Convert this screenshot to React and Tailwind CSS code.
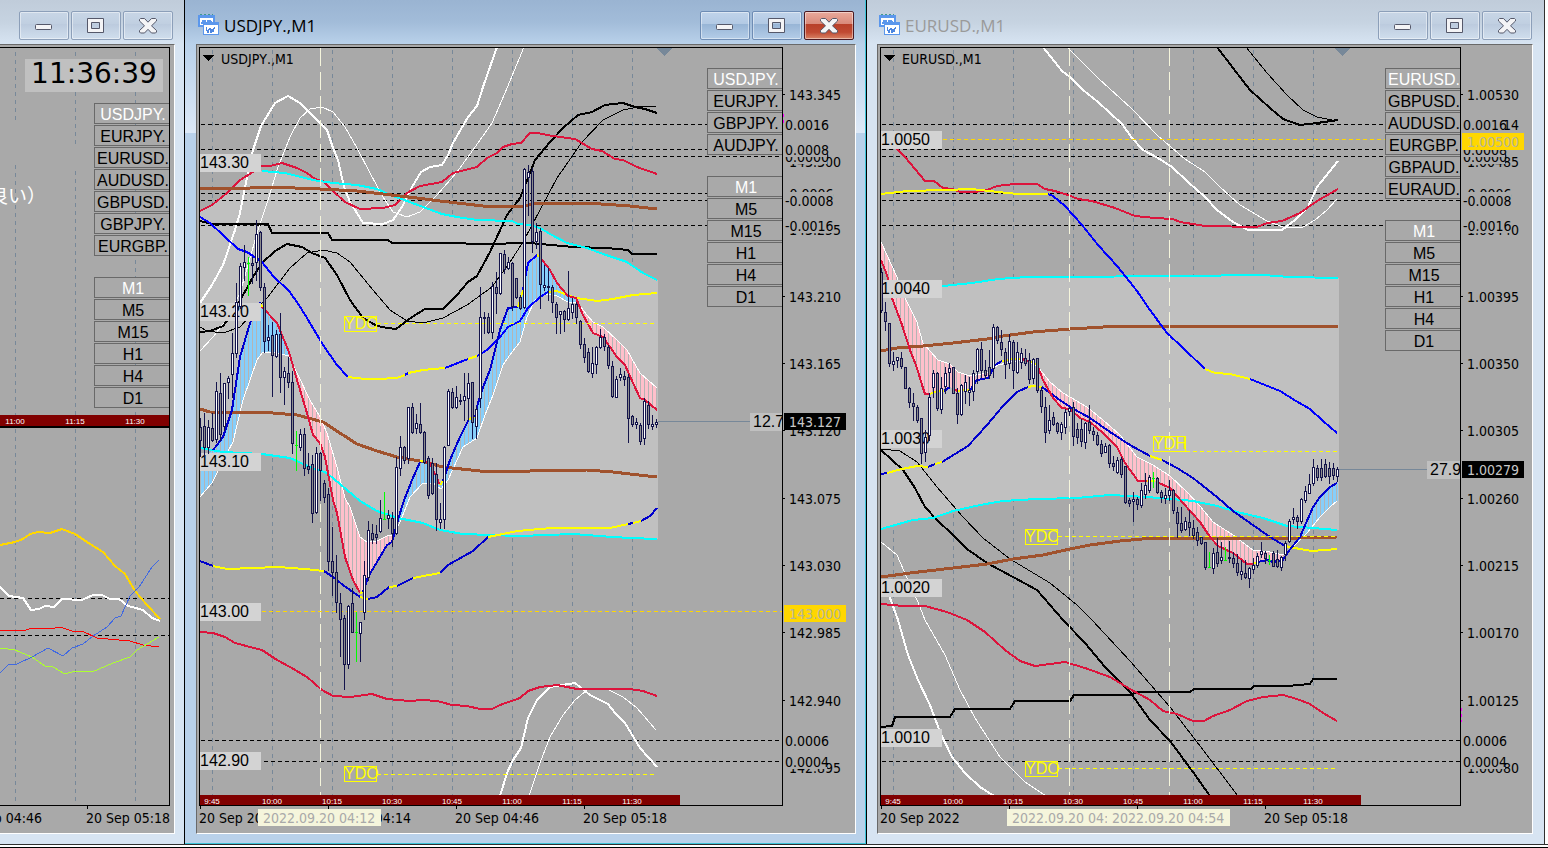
import React from "react";

const C = {
  red: "#dc143c",
  brown: "#a0522d",
  cyan: "#00ffff",
  blue: "#0000ff",
  navy: "#0000cd",
  yellow: "#ffff00",
  white: "#ffffff",
  black: "#000000",
  slate: "#778899",
  gold: "#ffd700",
};

const GRAY = "#a9a9a9";
const SILVER = "#c0c0c0";
const CONDENSED = '"DejaVu Sans Condensed", "DejaVu Sans", sans-serif';
const ARIAL = '"Liberation Sans", Arial, sans-serif';

/* Each chart is described in one shared coordinate space; `left` is where its plot starts. */
const USDJPY = {
  symbol: "USDJPY.",
  left: 200,
  axisLeft: 783,
  end: 658,
  marker: 664,
  grid: [212, 272, 332, 392, 452, 512, 572, 632],
  hours: ["9:45", "10:00", "10:15", "10:30", "10:45", "11:00", "11:15", "11:30"],
  levels: [124, 149, 156, 193, 200, 225, 740, 761],
  barEnd: 680,
  cursors: [320],
  cloud:
    "200,211 212,205 227,193 240,180 253,172 262,171 285,173 313,180 333,183 357,185 377,189 393,196 407,201 423,207 442,214 457,217 477,220 512,221 518,224 530,225 540,228 550,234 567,243 587,248 603,254 627,262 643,273 658,280 658,539 630,538 613,537 573,534 520,536 490,535 463,534 440,530 423,523 398,518 377,511 360,501 340,484 327,473 310,467 290,458 262,454 223,452 200,448",
  ribbons: [
    ["url(#sky)", "200,462 215,448 223,437 232,410 240,357 250,323 260,302 262,307 277,323 289,352 289,356 273,352 262,353 257,360 243,400 233,442 227,453 212,483 200,497"],
    ["url(#pink)", "289,352 297,373 310,400 320,417 327,433 337,467 345,498 350,507 360,537 367,542 377,541 387,536 393,535 392,542 387,545 377,562 368,577 363,592 360,593 353,580 345,557 337,513 333,500 325,457 320,443 313,435 307,413 297,380"],
    ["url(#sky)", "398,520 403,503 412,480 420,462 430,463 440,485 450,460 460,437 469,419 475,417 478,403 483,387 490,370 500,330 508,308 518,307 523,290 528,263 537,255 540,257 550,270 557,283 568,296 577,298 577,302 568,302 557,296 545,294 535,300 527,317 520,342 512,352 503,365 493,395 485,415 477,438 468,443 463,447 448,480 441,489 433,483 423,483 410,497 400,522"],
    ["url(#pink)", "577,300 587,315 593,322 603,327 617,340 627,350 640,373 657,388 657,410 645,400 640,398 633,383 625,365 617,357 603,337 593,333 583,315"],
  ],
  under: [
    [C.white, 1, "200,497 212,483 227,453 233,442 243,400 257,360 262,353 273,352 289,356 297,373 310,400 320,417 327,433 337,467 345,498 350,507 360,537 367,542 377,541 387,536 393,535 400,522 410,497 423,483 433,483 441,489 448,480 463,447 477,438 485,415 493,395 503,365 512,352 520,342 527,317 535,300 545,294 557,296 568,302 577,302 587,315 593,322 603,327 617,340 627,350 640,373 657,388"],
    [C.white, 2, "200,303 212,285 223,265 235,230 240,213 245,187 253,150 261,126 275,103 288,96 300,103 308,111 320,123 327,130 333,148 338,160 344,187 350,202 357,213 363,223 383,224 393,220 402,207 412,187 421,172 430,167 442,165 448,155 453,143 468,117 477,106 483,87 497,47"],
    [C.white, 1, "200,351 213,337 228,318 240,293 250,258 258,230 268,200 278,167 290,137 300,118 310,109 322,107 333,112 345,127 357,148 370,173 383,197 393,212 407,217 420,212 437,195 457,172 473,150 492,123 505,93 524,47"],
    [C.black, 2, "200,332 210,331 223,326 233,313 242,297 253,277 262,263 275,251 287,244 302,247 312,253 325,258 337,275 350,300 363,318 377,326 388,328 396,329 412,317 425,309 443,309 457,295 468,282 477,276 490,252 507,215 520,198 528,178 535,160 550,142 563,128 578,115 592,112 605,105 623,103 635,107 645,109 657,113"],
    [C.black, 1, "200,327 207,331 223,333 240,327 257,308 267,298 290,268 307,253 323,250 337,253 350,262 373,290 390,310 407,321 423,323 443,318 467,305 492,287 510,262 523,242 540,210 557,178 582,142 603,120 623,110 643,106 656,107"],
    [C.black, 2, "200,221 212,224 268,224 272,233 328,233 332,240 388,240 392,243 448,243 483,244 530,243 573,247 607,248 628,250 632,254 657,254"],
    [C.white, 2, "500,796 507,773 513,760 521,748 528,718 537,700 550,687 575,683 590,695 608,704 615,713 625,723 640,748 657,767"],
    [C.white, 1, "529,796 540,763 550,737 563,715 575,700 587,690 607,689 623,697 637,708 656,730"],
    [C.red, 2, "200,211 212,205 227,193 240,180 253,172 261,166 270,166 282,163 297,168 307,173 315,179 323,181 333,191 345,202 360,209 383,208 395,205 407,193 420,186 442,182 453,173 477,167 487,158 497,153 503,147 512,144 521,143 530,133 537,133 553,136 575,139 592,149 602,151 615,159 623,160 637,167 657,174"],
    [C.red, 2, "200,632 213,633 225,637 235,643 250,647 262,650 277,660 290,667 307,677 322,690 333,696 350,697 372,694 387,699 410,701 423,700 437,701 452,705 467,706 480,709 492,709 500,705 520,698 528,691 540,687 557,685 577,689 630,689 643,691 657,696"],
    [C.cyan, 2, "262,171 285,173 313,180 333,183 357,185 377,189 393,196 407,201 423,207 442,214 457,217 477,220 512,221 518,224 530,225 540,228 550,234 567,243 587,248 603,254 627,262 643,273 657,280"],
    [C.cyan, 2, "200,448 223,452 262,454 290,458 310,467 327,473 340,484 360,501 377,511 398,518 423,523 440,530 463,534 490,535 520,536 573,534 613,537 630,538 657,539"],
    [C.brown, 3, "200,188 250,188 270,187 320,189 357,191 383,194 417,198 440,201 483,206 523,206 540,203 587,203 630,206 657,209"],
    [C.brown, 3, "200,409 210,412 273,413 297,415 323,422 343,435 357,444 377,451 397,457 420,461 443,467 480,471 530,471 587,470 613,472 630,474 657,477"],
    [C.blue, 2, "200,217 210,223 238,249 247,252 262,262 273,276 289,291 297,302 307,318 323,345 337,365 348,377"],
    [C.yellow, 2, "348,377 365,379 377,379 397,378 405,375"],
    [C.blue, 2, "405,375 408,373"],
    [C.yellow, 2, "408,373 423,370 445,368"],
    [C.blue, 2, "445,368 468,359"],
    [C.yellow, 2, "468,359 477,356"],
    [C.blue, 2, "477,356 487,350 500,337 508,327 520,321 528,308 540,297 548,292"],
    [C.yellow, 2, "548,292 557,291 570,296 577,298 597,301 613,299 633,295 657,293"],
    [C.navy, 2, "200,561 213,566"],
    [C.yellow, 2, "213,566 227,569 253,568 278,567 305,569 324,571"],
    [C.navy, 2, "324,571 333,577 343,585 360,597"],
    [C.yellow, 2, "360,597 368,599"],
    [C.navy, 2, "368,599 377,597 389,587"],
    [C.yellow, 2, "389,587 397,586"],
    [C.navy, 2, "397,586 413,578"],
    [C.yellow, 2, "413,578 440,573"],
    [C.navy, 2, "440,573 448,565 473,551 488,537"],
    [C.yellow, 2, "488,537 503,534 517,531 552,528 610,528 628,524"],
    [C.navy, 2, "628,524 633,523"],
    [C.yellow, 2, "633,523 641,521"],
    [C.navy, 2, "641,521 650,516 657,508"],
    [C.navy, 2, "213,450 217,445 223,437 232,410 240,357 250,323 260,302"],
    [C.yellow, 2, "260,303 263,308"],
    [C.red, 2, "262,307 277,323 289,352 297,380 307,413 313,435 320,443 325,457 333,500 337,513 345,557 353,580 360,593"],
    [C.yellow, 2, "360,593 363,592"],
    [C.navy, 2, "363,592 368,577 377,562 387,545 392,542 398,520 403,503 412,480 420,462"],
    [C.yellow, 2, "420,461 424,461"],
    [C.red, 2, "424,461 430,463 440,485"],
    [C.yellow, 2, "440,485 443,481"],
    [C.navy, 2, "443,481 450,460 460,437 469,419"],
    [C.yellow, 2, "469,419 475,417"],
    [C.navy, 2, "475,417 478,403 483,387 490,370 500,330 508,308 518,307"],
    [C.yellow, 2, "518,307 523,290"],
    [C.blue, 2, "523,290 528,263 537,255"],
    [C.yellow, 2, "537,255 540,257"],
    [C.red, 2, "540,257 550,270 557,283 568,296 576,298 583,315 593,333 603,337 617,357 625,365 633,383 640,398 645,400 657,410"],
  ],
  tags: [
    ["143.30", 154],
    ["143.20", 303],
    ["143.10", 453],
    ["143.00", 603],
    ["142.90", 752],
  ],
  dashes: [
    [C.gold, 611, 262, 782],
    [C.yellow, 323, 377, 657],
    [C.yellow, 774, 377, 657],
  ],
  notes: [
    ["YDC", 344, 316],
    ["YDO", 344, 766],
  ],
  bid: { y: 421, text: "12.7", x: 750 },
  candles:
    "418,427,440,456,d 413,426,447,457,d 420,427,447,453,u 413,428,440,441,d 382,391,439,442,u 373,393,434,440,d 383,383,426,430,u 376,378,382,398,u 333,353,374,397,u 283,302,353,357,u 263,266,306,308,u 245,262,267,280,u 257,263,263,296,g 257,263,265,283,d 220,234,262,280,u 231,232,287,290,d 283,287,341,352,d 325,337,340,350,u 322,335,355,396,d 330,334,356,357,u 313,334,377,392,d 367,371,377,404,u 357,373,382,387,d 371,382,443,453,d 431,445,445,471,g 429,434,447,450,u 428,434,468,475,d 453,466,469,473,d 455,464,513,522,d 447,453,512,513,u 452,453,470,500,d 480,483,497,502,d 488,494,561,570,d 527,561,572,595,d 555,572,602,612,d 593,603,619,656,d 615,618,664,689,d 605,606,664,668,u 588,603,632,632,d 612,632,632,662,g 622,622,633,661,u 561,575,612,619,u 521,530,577,580,u 524,533,539,543,d 525,534,537,543,d 500,518,531,532,u 492,519,519,520,g 510,515,518,528,u 512,518,533,546,d 457,467,533,534,u 436,447,468,475,u 446,447,460,463,d 407,407,458,463,u 403,407,432,433,d 414,423,428,433,u 403,424,432,433,d 431,432,462,463,d 456,458,495,498,d 458,463,493,494,d 463,474,519,530,d 503,519,522,528,u 446,447,519,528,u 389,391,445,445,u 388,392,407,408,d 386,397,407,408,u 394,400,401,404,d 373,396,400,420,u 373,383,398,420,u 382,382,422,438,d 406,409,426,438,u 287,317,398,407,u 312,317,318,333,u 313,317,332,333,d 282,286,332,338,u 272,287,293,313,d 253,253,293,294,u 250,254,269,273,d 257,262,268,269,u 262,263,306,310,d 278,278,297,298,d 295,297,308,309,d 168,169,307,308,u 165,172,177,215,u 168,171,241,252,d 223,232,241,248,u 228,231,284,308,d 265,285,287,290,u 268,286,287,300,u 285,287,302,312,d 302,304,317,333,d 311,311,314,333,u 310,311,319,331,d 271,308,319,320,u 298,304,312,318,u 302,304,317,323,d 320,321,344,348,d 338,344,357,362,d 348,352,371,372,d 347,363,373,377,u 346,347,364,373,u 329,337,347,348,u 334,337,346,350,d 345,347,365,368,d 361,366,396,397,d 376,379,397,397,u 368,374,377,380,u 371,376,379,385,d 374,377,418,442,d 415,416,424,426,d 418,422,424,428,u 423,425,441,444,d 398,401,438,444,u 401,405,424,428,d 415,424,426,429,u 419,422,424,427,u",
  axis: [
    ["143.345", 94], ["143.300", 161], ["143.255", 229], ["143.210", 296], ["143.165", 363], ["143.120", 430],
    ["143.075", 498], ["143.030", 565], ["142.985", 632], ["142.940", 700], ["142.895", 767],
  ],
  current: ["143.127", 413],
  alarm: ["143.000", 605],
  hint: [114, 124],
  times: [["20 Sep 2022", 199], ["20 Sep 04:14", 327], ["20 Sep 04:46", 455], ["20 Sep 05:18", 583]],
  ticks: [200, 328, 456, 584],
  stamps: [["2022.09.20 04:12", 258]],
};

const EURUSD = {
  symbol: "EURUSD.",
  left: 881,
  axisLeft: 1461,
  end: 1339,
  marker: 1342,
  grid: [893, 953, 1013, 1073, 1133, 1193, 1253, 1313],
  hours: ["9:45", "10:00", "10:15", "10:30", "10:45", "11:00", "11:15", "11:30"],
  levels: [124, 149, 156, 193, 200, 225, 740, 761],
  barEnd: 1361,
  cursors: [1069, 1169],
  cloud:
    "881,291 943,286 972,283 998,279 1028,277 1205,276 1237,275 1263,275 1290,277 1339,278 1339,530 1313,528 1287,526 1263,518 1237,512 1217,506 1193,501 1160,498 1130,496 1110,495 1077,498 1037,499 1003,501 980,505 953,511 933,518 913,520 881,529",
  ribbons: [
    ["url(#pink)", "881,242 897,277 905,298 917,322 923,343 938,360 950,364 958,372 970,376 987,373 995,365 988,378 977,380 970,390 957,391 950,387 938,391 925,394 922,385 917,368 910,350 902,325 892,298 887,275 881,260"],
    ["url(#pink)", "1035,363 1038,367 1050,382 1063,393 1070,397 1087,407 1103,420 1120,435 1137,457 1153,465 1170,476 1187,492 1200,506 1213,522 1233,535 1253,550 1270,552 1283,555 1283,560 1273,562 1267,560 1258,563 1247,564 1233,553 1218,546 1210,537 1200,522 1183,503 1170,488 1155,481 1138,481 1125,463 1117,447 1103,433 1090,422 1080,418 1070,409 1062,408 1053,398 1043,380"],
    ["url(#sky)", "1286,554 1300,537 1313,507 1320,497 1330,487 1338,483 1338,501 1330,507 1320,517 1307,533 1293,547"],
  ],
  under: [
    [C.white, 1, "881,242 897,277 905,298 917,322 923,343 938,360 950,364 958,372 970,376 987,373 998,365 1007,363 1020,360 1030,362 1038,367 1050,382 1063,393 1070,397 1087,407 1103,420 1120,435 1137,457 1153,465 1170,476 1187,492 1200,506 1213,522 1233,535 1253,550 1270,552 1283,555 1293,547 1307,533 1320,517 1330,507 1337,501"],
    [C.white, 2, "1043,47 1062,71 1070,77 1083,90 1098,102 1110,113 1122,124 1132,138 1143,150 1158,158 1172,167 1188,182 1205,197 1217,210 1233,222 1248,230 1282,230 1295,220 1308,207 1317,187 1338,161"],
    [C.white, 1, "1067,47 1098,78 1132,109 1158,136 1185,159 1205,172 1220,187 1240,205 1267,221 1283,227 1303,227 1315,220 1327,210 1337,199"],
    [C.white, 2, "885,584 890,598 898,620 908,655 918,680 930,705 940,732 952,757 965,773 980,787 994,796"],
    [C.white, 1, "881,542 897,555 907,578 918,602 925,620 945,655 960,690 975,718 1000,757 1025,782 1046,796"],
    [C.black, 2, "1217,47 1233,68 1250,90 1270,108 1283,119 1300,125 1317,123 1338,120"],
    [C.black, 1, "1246,47 1267,73 1287,95 1303,110 1317,117 1337,121"],
    [C.black, 2, "881,450 903,470 915,488 925,507 937,520 953,535 967,549 987,563 1013,577 1037,590 1063,620 1085,643 1105,667 1130,692 1150,720 1170,741 1193,772 1210,796"],
    [C.black, 1, "881,449 900,451 917,462 937,487 963,517 983,538 1010,559 1050,583 1077,605 1092,620 1130,661 1170,707 1197,742 1238,796"],
    [C.black, 2, "881,727 892,726 895,717 950,717 955,709 1010,709 1015,701 1070,701 1074,695 1130,695 1137,692 1190,692 1194,689 1251,689 1254,686 1287,686 1310,684 1313,679 1337,679"],
    [C.red, 2, "897,149 905,157 925,181 934,181 943,188 953,189 960,192 975,192 987,190 997,186 1015,184 1037,184 1045,189 1055,191 1068,195 1078,199 1092,201 1115,208 1135,216 1155,218 1173,219 1180,222 1205,226 1257,227 1267,223 1282,221 1300,213 1317,201 1338,189"],
    [C.red, 2, "881,604 903,606 925,606 947,612 967,620 985,632 1005,650 1020,661 1035,666 1065,662 1085,668 1110,677 1130,689 1150,700 1163,711 1177,714 1193,721 1204,721 1213,716 1230,710 1247,701 1263,697 1283,695 1297,699 1310,704 1323,713 1337,721"],
    [C.cyan, 2, "881,291 943,286 972,283 998,279 1028,277 1205,276 1237,275 1263,275 1290,277 1338,278"],
    [C.cyan, 2, "881,529 913,520 933,518 953,511 980,505 1003,501 1037,499 1077,498 1110,495 1130,496 1160,498 1193,501 1217,506 1237,512 1263,518 1287,526 1313,528 1337,530"],
    [C.brown, 3, "881,351 897,348 923,346 953,343 987,339 1003,336 1033,332 1070,329 1120,326 1338,326"],
    [C.brown, 3, "881,577 910,573 953,568 987,564 1013,559 1043,555 1070,549 1090,545 1120,541 1153,538 1200,538 1287,538 1297,538 1337,537"],
    [C.yellow, 2, "881,194 908,191 945,190 972,189 998,192 1018,194 1048,194"],
    [C.blue, 2, "1048,194 1053,196 1065,206 1082,225 1098,245 1118,267 1137,291 1150,310 1167,333 1183,348 1205,369"],
    [C.yellow, 2, "1205,369 1215,373 1230,374 1250,379"],
    [C.blue, 2, "1250,379 1265,385 1280,391 1296,401 1310,409 1323,421 1337,433"],
    [C.navy, 2, "881,474 887,473"],
    [C.yellow, 2, "887,473 902,469 917,466 928,467"],
    [C.navy, 2, "928,467 935,464"],
    [C.yellow, 2, "935,464 942,462"],
    [C.navy, 2, "942,462 968,446 987,425 1003,406 1017,392 1028,387"],
    [C.yellow, 2, "1028,387 1033,386 1042,387"],
    [C.navy, 2, "1042,387 1057,398 1070,407 1090,418 1110,432 1130,445 1150,456"],
    [C.yellow, 2, "1150,456 1162,460"],
    [C.navy, 2, "1162,460 1177,468 1193,478 1217,497 1233,511 1250,523 1270,537 1285,546"],
    [C.yellow, 2, "1285,546 1300,549 1312,551 1337,549"],
    [C.red, 2, "881,260 887,275 892,298 902,325 910,350 917,368 922,385 925,394 930,394"],
    [C.yellow, 2, "930,394 938,391 944,391"],
    [C.navy, 2, "944,391 950,387"],
    [C.red, 2, "952,387 957,391"],
    [C.yellow, 2, "957,391 970,390"],
    [C.navy, 2, "970,390 977,380 988,378 995,365 1002,361"],
    [C.yellow, 2, "1002,361 1014,359 1022,359"],
    [C.red, 2, "1022,359 1030,362"],
    [C.yellow, 2, "1030,362 1037,364"],
    [C.red, 2, "1037,364 1043,380 1053,398 1062,408 1070,409 1080,418 1090,422 1103,433 1117,447 1125,463 1138,481 1147,481"],
    [C.yellow, 2, "1147,481 1155,481"],
    [C.red, 2, "1157,482 1170,488 1183,503 1200,522 1210,537 1218,546 1233,553 1247,564 1253,564"],
    [C.yellow, 2, "1253,564 1258,562"],
    [C.navy, 2, "1258,562 1267,560 1273,562 1283,560 1288,552 1300,537 1313,507 1320,497 1330,487 1337,483"],
  ],
  tags: [
    ["1.0050", 131],
    ["1.0040", 280],
    ["1.0030", 430],
    ["1.0020", 579],
    ["1.0010", 729],
  ],
  dashes: [
    [C.gold, 139, 943, 1460],
    [C.yellow, 536, 1058, 1338],
    [C.yellow, 451, 1186, 1338],
    [C.yellow, 768, 1058, 1338],
  ],
  notes: [
    ["YDC", 1025, 529],
    ["YDH", 1153, 436],
    ["YDO", 1025, 761],
  ],
  bid: { y: 469, text: "27.9", x: 1427 },
  candles:
    "268,272,310,312,d 302,312,321,330,d 323,323,363,366,d 352,361,364,370,u 357,357,360,367,u 352,358,366,368,d 367,367,388,388,d 387,388,402,407,d 393,403,406,420,d 405,407,420,422,d 418,418,453,463,d 430,437,452,461,u 393,397,435,440,u 370,373,387,397,u 372,373,408,410,d 377,388,409,413,u 367,373,386,393,u 363,368,372,387,u 367,367,393,393,d 388,393,414,423,d 384,385,414,415,u 375,382,391,403,u 377,390,392,405,u 370,373,391,400,u 348,349,371,383,u 342,349,370,377,d 360,370,375,378,d 350,367,375,378,d 324,327,368,377,u 326,327,340,343,d 330,342,349,355,d 348,352,364,378,d 334,341,363,368,u 340,342,370,388,d 342,352,372,373,u 348,353,362,368,u 349,358,363,365,d 353,360,379,383,d 358,359,378,383,u 358,358,390,392,d 387,390,406,412,d 397,407,432,442,d 405,420,430,433,u 412,417,424,425,d 422,423,431,433,d 422,424,432,439,u 409,412,427,433,u 407,408,411,415,u 402,407,436,445,d 423,429,437,443,d 419,429,441,446,d 422,423,442,448,u 405,422,430,433,d 427,431,434,440,d 432,435,444,445,d 440,444,453,456,d 443,446,452,452,u 444,445,463,467,d 456,463,466,470,d 457,460,472,473,u 457,459,474,477,d 466,466,502,503,d 498,500,503,506,d 492,499,501,521,u 497,499,504,509,d 483,490,505,507,u 473,485,494,498,u 475,477,490,492,u 472,478,478,488,g 477,478,492,493,d 490,492,497,502,d 488,495,498,503,u 480,490,495,500,u 489,490,510,513,d 507,512,523,537,d 507,523,530,532,d 517,521,529,530,u 510,522,527,535,d 520,528,535,538,d 527,532,540,545,d 537,537,543,544,d 542,542,567,569,d 552,567,567,567,g 548,553,568,573,u 538,552,563,566,d 542,557,560,563,u 547,560,560,560,g 541,557,558,562,d 552,558,563,567,d 554,563,572,575,d 560,571,574,579,u 560,573,577,578,d 567,568,578,587,u 558,565,569,573,u 553,556,565,567,u 542,551,554,557,u 551,553,558,563,d 555,560,560,565,g 551,553,566,566,d 550,559,566,567,d 556,557,567,570,u 541,543,554,560,u 519,521,541,542,u 508,517,519,523,u 515,517,521,528,d 498,499,521,523,u 486,491,500,502,u 474,484,493,493,u 459,467,483,485,u 465,468,477,480,d 459,468,477,480,d 459,464,476,477,d 462,468,476,483,d 463,468,475,479,d 467,469,476,481,u",
  axis: [
    ["1.00530", 94], ["1.00514", 124], ["1.00485", 161], ["1.00440", 229], ["1.00395", 296], ["1.00350", 363], ["1.00305", 430],
    ["1.00260", 498], ["1.00215", 565], ["1.00170", 632], ["1.00125", 700], ["1.00080", 767],
  ],
  current: ["1.00279", 461],
  alarm: ["1.00500", 133],
  hint: [708, 722],
  times: [["20 Sep 2022", 880], ["20 Sep 05:18", 1264]],
  ticks: [881, 1009, 1137, 1265],
  stamps: [["2022.09.20 04:29", 1007], ["2022.09.20 04:54", 1107]],
};

/* Drawn bottom-most first: later readouts cover earlier ones. */
const READOUTS = [
  ["0.0000", 156],
  ["0.0008", 149],
  ["0.0016", 124],
  ["-0.0006", 193],
  ["-0.0008", 200],
  ["-0.0016", 225],
  ["0.0006", 740],
  ["0.0004", 761],
];

const CORRELATION = [
  [C.gold, 2, "0,545 15,542 23,539 30,534 38,532 50,533 62,529 75,534 90,544 103,552 115,566 125,574 135,591 147,605 160,619"],
  [C.white, 2, "0,587 9,596 23,598 31,610 39,609 45,606 54,607 62,599 82,600 93,595 102,595 110,599 119,599 128,606 143,610 152,618 160,621"],
  ["#ff0000", 1, "0,631 12,630 23,631 32,628 50,629 60,627 72,631 82,631 97,638 130,641 143,645 159,647"],
  ["#adff2f", 1, "0,648 15,650 32,657 45,666 53,667 65,674 75,671 92,672 113,663 130,657 137,650 159,637"],
  ["#4169e1", 1, "0,673 8,665 17,664 32,657 48,648 63,656 72,648 83,644 93,636 107,627 115,618 121,616 130,596 139,587 152,567 159,560"],
];

const FRAMES = ["M1", "M5", "M15", "H1", "H4", "D1"];

function Curve({ line }) {
  const [color, width, points] = line;
  return <polyline points={points} fill="none" stroke={color} strokeWidth={width} strokeLinejoin="round" />;
}

function Dashed({ color, y, x1, x2 }) {
  return <line x1={x1} x2={x2} y1={y + 0.5} y2={y + 0.5} stroke={color} strokeDasharray="4 3" />;
}

function GridLine({ x, y1, y2 }) {
  return <line x1={x + 0.5} x2={x + 0.5} y1={y1} y2={y2} stroke={C.slate} strokeDasharray="4 4" />;
}

function Candles({ data, left }) {
  return data.split(" ").map((row, i) => {
    const cells = row.split(",");
    const [h, t, b, l] = cells.slice(0, 4).map(Number);
    const x = left + i * 4 + 0.5;
    if (cells[4] === "g") {
      return <path key={i} d={`M${x} ${h}V${l}M${x - 1.5} ${t + 0.5}h3`} stroke="#00ff00" strokeWidth="1" />;
    }
    return (
      <g key={i} stroke="#14144b">
        <line x1={x} x2={x} y1={h} y2={l + 1} />
        <rect x={x - 1} y={t + 0.5} width="2" height={Math.max(1, b - t)} fill={cells[4] === "u" ? "#ffffff" : "#8c8c8c"} />
      </g>
    );
  });
}

function Plot({ chart }) {
  return (
    <svg className="absolute inset-0 h-full w-full" shapeRendering="crispEdges" role="img" aria-label={`${chart.symbol} M1 price chart`}>
      <defs>
        <pattern id="sky" width="4" height="4" patternUnits="userSpaceOnUse">
          <rect width="4" height="4" fill="#87cefa" />
          <rect width="1" height="4" fill="#b4b4b4" />
        </pattern>
        <pattern id="pink" width="4" height="4" patternUnits="userSpaceOnUse">
          <rect width="4" height="4" fill="#ffc0cb" />
          <rect width="1" height="4" fill="#b4b4b4" />
        </pattern>
      </defs>
      <g transform={`translate(${-chart.left} -48)`}>
        {chart.grid.map((x) => (
          <GridLine key={x} x={x} y1={50} y2={795} />
        ))}
        <polygon points={chart.cloud} fill={SILVER} />
        {chart.levels.map((y) => (
          <Dashed key={y} color={C.black} y={y} x1={chart.left + 1} x2={chart.axisLeft} />
        ))}
        {chart.ribbons.map(([fill, points]) => (
          <polygon key={points} points={points} fill={fill} />
        ))}
        {chart.under.map((line, i) => (
          <Curve key={i} line={line} />
        ))}
        {chart.cursors.map((x) => (
          <line key={x} x1={x + 0.5} x2={x + 0.5} y1={48} y2={795} stroke="#f5f5dc" strokeDasharray="18 6" />
        ))}
        {chart.dashes.map(([color, y, x1, x2]) => (
          <Dashed key={y} color={color} y={y} x1={x1} x2={x2} />
        ))}
        {chart.tags.map(([text, y]) => (
          <g key={text}>
            <rect x={chart.left} y={y} width="61" height="18" fill="#d3d3d3" />
            <text x={chart.left} y={y + 14} fontSize="16" fontFamily={ARIAL}>
              {text}
            </text>
          </g>
        ))}
        {chart.notes.map(([text, x, y]) => (
          <g key={text + y}>
            <text x={x} y={y + 13} fontSize="16" fontFamily={ARIAL} fill={C.yellow}>
              {text}
            </text>
            <rect x={x + 0.5} y={y + 0.5} width="32" height="15" fill="none" stroke={C.yellow} />
          </g>
        ))}
        <Candles data={chart.candles} left={chart.left} />
        <line x1={chart.end} x2={chart.bid.x} y1={chart.bid.y + 0.5} y2={chart.bid.y + 0.5} stroke={C.slate} />
        <rect x={chart.bid.x} y={chart.bid.y - 8} width="40" height="18" fill={SILVER} />
        <text x={chart.bid.x + 3} y={chart.bid.y + 6} fontSize="16" fontFamily={ARIAL}>
          {chart.bid.text}
        </text>
        <path d={`M${chart.marker - 7} 48h15l-7.500 8z`} fill={C.slate} />
        <path d={`M${chart.left + 3} 55h11l-5.500 6z`} fill="#000000" />
        <text x={chart.left + 21} y={64} fontSize="14" fontFamily={CONDENSED} className="[font-kerning:none]">
          {chart.symbol},M1
        </text>
        <rect x={chart.left} y="795" width={chart.barEnd - chart.left} height="10" fill="#800000" />
        {chart.hours.map((text, i) => (
          <text key={text} x={chart.grid[i]} y="804" fontSize="8" fontFamily={ARIAL} fill="#ffffff" textAnchor="middle">
            {text}
          </text>
        ))}
      </g>
    </svg>
  );
}

function PriceAxis({ chart }) {
  const x = chart.axisLeft;
  return (
    <svg className="h-full w-full" shapeRendering="crispEdges" fontFamily={CONDENSED} fontSize="14">
      <g transform={`translate(${-x} -48)`}>
        {chart.axis.map(([text, y]) => (
          <g key={text}>
            <line x1={x} x2={x + 2} y1={y + 0.5} y2={y + 0.5} stroke="#000000" />
            <text x={x + 6} y={y + 6}>
              {text}
            </text>
          </g>
        ))}
        {READOUTS.map(([text, y]) => (
          <g key={text}>
            <rect x={x} y={y - 8} width={text.length * 6 + 8} height="16" fill={GRAY} />
            <text x={x + 2} y={y + 6}>
              {text}
            </text>
          </g>
        ))}
        <rect x={x + 1} y={chart.alarm[1]} width="62" height="17" fill={C.gold} />
        <text x={x + 6} y={chart.alarm[1] + 14} fill="#b5b59a">
          {chart.alarm[0]}
        </text>
        <rect x={x + 1} y={chart.current[1]} width="62" height="17" fill="#000000" />
        <text x={x + 6} y={chart.current[1] + 14} fill="#c8c8c8">
          {chart.current[0]}
        </text>
        <line x1={x} x2={x} y1={chart.hint[0]} y2={chart.hint[1]} stroke="#ff00ff" strokeWidth="2" strokeDasharray="3 3" />
      </g>
    </svg>
  );
}

function TimeAxis({ left, times, ticks, stamps }) {
  return (
    <svg className="h-full w-full" shapeRendering="crispEdges" fontFamily={CONDENSED} fontSize="14">
      <g transform={`translate(${-left} -806)`}>
        {ticks.map((x) => (
          <line key={x} x1={x + 0.5} x2={x + 0.5} y1="806" y2="809" stroke="#000000" />
        ))}
        {times.map(([text, x]) => (
          <text key={x} x={x} y="823">
            {text}
          </text>
        ))}
        {stamps.map(([text, x]) => (
          <g key={x}>
            <rect x={x} y="809" width="123" height="17" fill="#f5f5dc" />
            <text x={x + 5} y="823" fill={GRAY}>
              {text}
            </text>
          </g>
        ))}
      </g>
    </svg>
  );
}

function SideButton({ active, children }) {
  return (
    <button
      type="button"
      className={
        "flex h-[21px] w-full items-center justify-center overflow-hidden whitespace-nowrap border-y border-l border-[#696969] bg-[#a9a9a9] pl-[2px] pt-[2px] font-['Liberation_Sans',Arial,sans-serif] text-[16px] leading-4 " +
        (active ? "text-white" : "text-black")
      }
    >
      {children}
    </button>
  );
}

function Switcher({ symbols, className }) {
  return (
    <div className={"absolute right-0 flex w-[75px] flex-col gap-[21px] " + className}>
      <div className="flex flex-col gap-px">
        {symbols.map((s, i) => (
          <SideButton key={s} active={i === 0}>
            {s}
          </SideButton>
        ))}
      </div>
      <div className="flex flex-col gap-px">
        {FRAMES.map((s, i) => (
          <SideButton key={s} active={i === 0}>
            {s}
          </SideButton>
        ))}
      </div>
    </div>
  );
}

function ChartIcon() {
  return (
    <svg width="22" height="22" viewBox="0 0 22 22" shapeRendering="crispEdges" aria-hidden="true">
      <rect x="0" y="1" width="17" height="12" fill="#5b97ec" />
      <path d="M2 0h2v1H2zM6 0h2v1H6zM10 0h2v1h-2zM14 0h1v1h-1z" fill="#3f9a8c" />
      <rect x="2" y="4" width="13" height="7" fill="#ffffff" />
      <path d="M3 8.500h2v-2h2v2h3v-2h2v1h2" fill="none" stroke="#5b97ec" strokeWidth="2" />
      <rect x="5" y="8" width="16" height="13" fill="#5b97ec" />
      <rect x="6" y="11" width="14" height="9" fill="#ffffff" />
      <path d="M8.500 13v3h1v2h1v-3h1v-1h1v4h1v-3h1v2h1v-3h1v-1" fill="none" stroke="#4c86e0" />
    </svg>
  );
}

function CaptionButtons({ active }) {
  const base = "flex h-[29px] w-[50px] items-center justify-center rounded-[2px] border shadow-[inset_0_0_0_1px_rgba(255,255,255,0.45)] ";
  const plain = active
    ? "border-[#6e8cb4] bg-[linear-gradient(#c0d3ea_0%,#b2c9e4_45%,#98b5d6_46%,#b4cde8_100%)]"
    : "border-[#8c9fb9] bg-[linear-gradient(#c8d6e6_0%,#c0cfe1_45%,#bccbde_46%,#d0deed_100%)]";
  const close = active
    ? "border-[#4b1a22] bg-[linear-gradient(#e9a99b_0%,#d98a7b_44%,#b8402a_45%,#c04a33_75%,#d98467_100%)]"
    : plain;
  return (
    <div className="flex gap-[2px]">
      <button type="button" aria-label="Minimize" className={base + plain}>
        <svg width="18" height="8" viewBox="0 0 18 8">
          <rect x="0.500" y="2.500" width="16" height="5" rx="1" fill="#f4f4f6" stroke="#55586a" />
        </svg>
      </button>
      <button type="button" aria-label="Maximize" className={base + plain}>
        <svg width="18" height="16" viewBox="0 0 18 16">
          <path d="M.500.500h16v14h-16zM4.500 4.500v6h8v-6z" fill="#f4f4f6" fillRule="evenodd" stroke="#55586a" />
        </svg>
      </button>
      <button type="button" aria-label="Close" className={base + close}>
        <svg width="18" height="16" viewBox="0 0 18 16">
          <path
            d="M.500 1.500L1.500.500h4L9 4.200 12.500.500h4l1 1v1.500L12.500 7.800l5 4.700V14l-1 1h-4L9 11.300 5.500 15h-4l-1-1v-1.500l5-4.700-5-4.800z"
            fill="#f4f4f6"
            stroke="#55586a"
          />
        </svg>
      </button>
    </div>
  );
}

function TitleBar({ title, active, className }) {
  return (
    <header className={"flex h-11 shrink-0 items-start justify-between overflow-hidden pt-[11px] " + className}>
      <div className="flex items-start gap-1">
        {title && (
          <span className="pt-[3px]">
            <ChartIcon />
          </span>
        )}
        {title && (
          <h2
            className={
              "whitespace-nowrap font-['Open_Sans','Noto_Sans',sans-serif] text-[17px] leading-[30px] " +
              (active ? "text-black" : "text-[#9a9a9a]")
            }
          >
            {title}
          </h2>
        )}
      </div>
      <CaptionButtons active={active} />
    </header>
  );
}

function ChartWindow({ chart, symbols, active }) {
  return (
    <section
      className={
        "flex min-w-0 flex-col " +
        (active
          ? "border-r border-black bg-[linear-gradient(#9ab4d2_0px,#a2bcd9_22px,#b9d1ea_44px,#dde9f7_133px,#b9d1ea_133px)] shadow-[inset_-1px_-1px_0_#3cc4d8]"
          : "mr-[3px] border-r border-[#303030] bg-[linear-gradient(#c0ccda_0px,#c6d3e1_22px,#d7e4f2_44px)]")
      }
    >
      <TitleBar
        title={`${chart.symbol},M1`}
        active={active}
        className={active ? "pl-[13px] pr-3" : "pl-3 pr-3"}
      />
      <div className={"flex flex-1 pb-[10px] " + (active ? "pl-[11px] pr-[10px]" : "pl-[10px] pr-[11px]")}>
        <div
          className={
            "grid min-w-0 flex-1 grid-rows-[minmax(759px,1fr)_27px] border-b border-l border-r border-t border-b-white border-l-[#696969] border-r-white border-t-[#696969] bg-[#a9a9a9] pl-[2px] pt-[2px] " +
            (active ? "grid-cols-[minmax(0,1fr)_72px]" : "grid-cols-[minmax(0,1fr)_71px]")
          }
        >
          <div className="relative overflow-hidden border border-black">
            <Plot chart={chart} />
            <Switcher symbols={symbols} className="top-5" />
          </div>
          <div className="overflow-hidden pt-px">
            <PriceAxis chart={chart} />
          </div>
          <div className="col-span-2 overflow-hidden">
            <TimeAxis left={chart.left - 1} times={chart.times} ticks={chart.ticks} stamps={chart.stamps} />
          </div>
        </div>
      </div>
    </section>
  );
}

function CorrelationWindow() {
  return (
    <section className="flex min-w-0 flex-col border-r border-black bg-[linear-gradient(#c0ccda_0px,#c6d3e1_22px,#d7e4f2_44px)]">
      <TitleBar className="pr-[11px]" />
      <div className="flex flex-1 pb-[10px] pr-[9px]">
        <div className="grid min-w-0 flex-1 grid-cols-1 grid-rows-[minmax(759px,1fr)_27px] border-b border-r border-t border-b-white border-r-white border-t-[#696969] bg-[#a9a9a9] pt-[2px]">
          <div className="relative mr-[4px] overflow-hidden border-y border-r border-black">
            <svg className="absolute inset-0 h-full w-full" shapeRendering="crispEdges" role="img" aria-label="Currency strength chart">
              <g transform="translate(0 -48)">
                {[
                  [15, 52, 121],
                  [15, 165, 415],
                  [75, 52, 145],
                  [75, 171, 415],
                  [135, 52, 415],
                  [15, 429, 804],
                  [75, 429, 804],
                  [135, 429, 804],
                ].map(([x, y1, y2]) => (
                  <GridLine key={x + "-" + y1} x={x} y1={y1} y2={y2} />
                ))}
                <rect x="0" y="415" width="170" height="11" fill="#800000" />
                <path d="M0 426.500h170M0 427.500h170" stroke="#000000" />
                {["11:00", "11:15", "11:30"].map((t, i) => (
                  <text key={t} x={15 + i * 60} y="424" fontSize="8" fontFamily={ARIAL} fill="#ffffff" textAnchor="middle">
                    {t}
                  </text>
                ))}
                <Dashed color={C.black} y={598} x1={0} x2={169} />
                <Dashed color={C.black} y={635} x1={0} x2={169} />
                {CORRELATION.map((line) => (
                  <Curve key={line[0]} line={line} />
                ))}
                <text x="46" y="203" fontSize="19" fontFamily='"Noto Sans CJK JP", sans-serif' fill="#ffffff" textAnchor="end">
                  良い）
                </text>
              </g>
            </svg>
            <time className="absolute right-[6px] top-[11px] flex h-[33px] w-[138px] items-start justify-center bg-[#c0c0c0] font-['DejaVu_Sans',sans-serif] text-[28px] leading-[30px] text-black">
              11:36:39
            </time>
            <Switcher
              symbols={["USDJPY.", "EURJPY.", "EURUSD.", "AUDUSD.", "GBPUSD.", "GBPJPY.", "EURGBP."]}
              className="top-[55px]"
            />
          </div>
          <div className="overflow-hidden">
            <TimeAxis left={0} times={[["20 Sep 04:46", -42], ["20 Sep 05:18", 86]]} ticks={[87]} stamps={[]} />
          </div>
        </div>
      </div>
    </section>
  );
}

export default function App() {
  return (
    <main className="flex min-h-screen flex-col border-b border-black bg-white pb-[2px]">
      <div className="grid flex-1 grid-cols-[185px_minmax(0,682fr)_minmax(0,681fr)] border-b border-[#303030]">
        <CorrelationWindow />
        <ChartWindow chart={USDJPY} symbols={["USDJPY.", "EURJPY.", "GBPJPY.", "AUDJPY."]} active />
        <ChartWindow
          chart={EURUSD}
          symbols={["EURUSD.", "GBPUSD.", "AUDUSD.", "EURGBP.", "GBPAUD.", "EURAUD."]}
        />
      </div>
    </main>
  );
}
